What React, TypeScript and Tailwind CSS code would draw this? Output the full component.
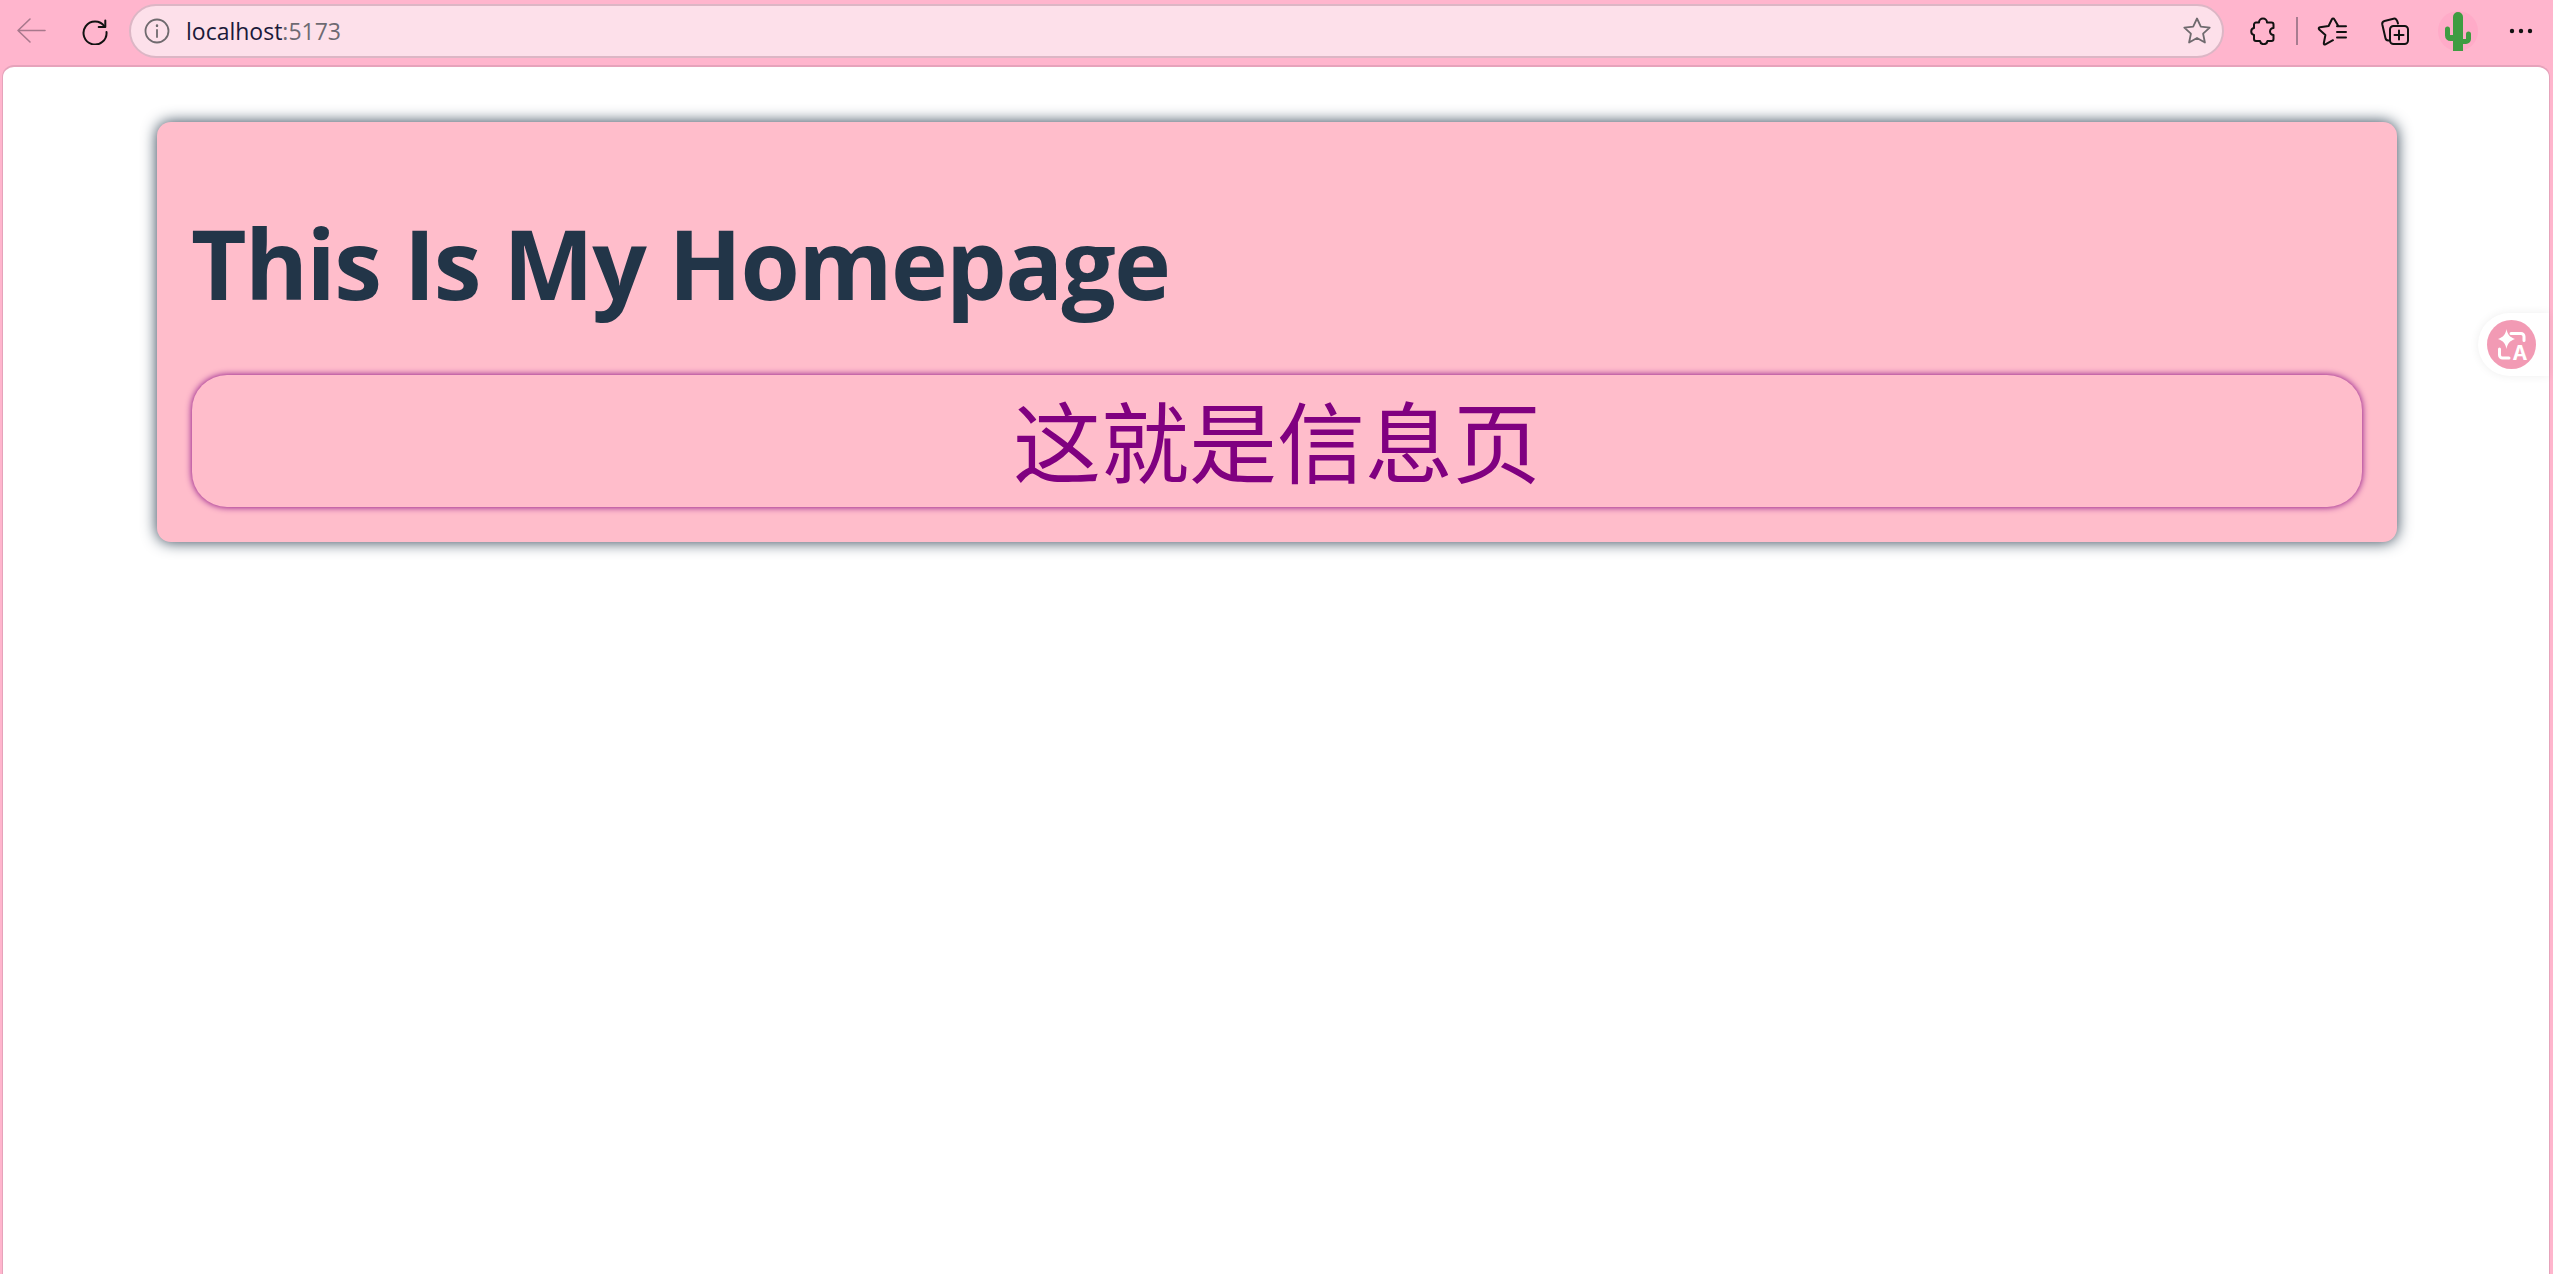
export default function App() {
  return (
    <div className="relative flex h-[1274px] w-full flex-col overflow-hidden bg-[#ffb5cd] font-['Inter','Noto_Sans',sans-serif]">
      {/* Browser toolbar */}
      <div className="flex h-[65px] shrink-0 items-center pb-[3px]">
        <div className="flex w-[129px] shrink-0 items-center">
          <svg className="ml-[16px]" width="30" height="28" viewBox="0 0 30 28" fill="none" stroke="#a8788c" strokeWidth="1.6" strokeLinecap="round" strokeLinejoin="round">
            <path d="M2 13.500h27M14 2L2 13.500 14 25" />
          </svg>
          <svg className="ml-[35px]" width="28" height="28" viewBox="0 0 28 28" fill="none" stroke="#111" strokeWidth="2" strokeLinecap="round" strokeLinejoin="round">
            <path d="M23.500 9.500A11.500 11.500 0 1 0 25.500 15" />
            <path d="M24.300 3.500v6.600h-6.600" />
          </svg>
        </div>
        <div className="flex h-[54px] w-[2095px] shrink-0 items-center rounded-[27px] border-2 border-[#dcb6c5] bg-[#fde0ea]">
          <svg className="ml-[13px]" width="26" height="26" viewBox="0 0 26 26" fill="none" stroke="#6f6a6e" strokeWidth="1.8" strokeLinecap="round">
            <circle cx="13" cy="13" r="11.500" />
            <path d="M13 12v7" />
            <path d="M13 7.500v.4" strokeWidth="2.400" />
          </svg>
          <span className="ml-[16px] text-[23px] leading-none text-[#1a1a3a] font-['Open_Sans',sans-serif]">
            localhost<span className="text-[#6e6a72]">:5173</span>
          </span>
          <svg className="ml-auto mr-[10px]" width="30" height="30" viewBox="0 0 30 30" fill="none" stroke="#6f6a6e" strokeWidth="1.8" strokeLinejoin="round">
            <path d="M15 2.500l3.800 8.200 8.900 1-6.600 6 1.800 8.800L15 22l-7.900 4.500 1.800-8.800-6.600-6 8.900-1z" />
          </svg>
        </div>
        <div className="flex flex-1 items-center">
          <svg className="ml-[26px]" width="26" height="28" viewBox="0 0 26 28" fill="none" stroke="#111" strokeWidth="2" strokeLinejoin="round">
            <path d="M9 5.500a4 4 0 0 1 8 0h4.500a2 2 0 0 1 2 2V11a3.500 3.500 0 0 0 0 7v4a2 2 0 0 1-2 2h-4a3.800 3.800 0 0 1-7.500 0H6a2 2 0 0 1-2-2v-4a3.600 3.600 0 0 1 0-7V7.500a2 2 0 0 1 2-2z" />
          </svg>
          <div className="ml-[20px] h-[28px] w-[2px] bg-[#a87c90]" />
          <svg className="ml-[18px]" width="32" height="30" viewBox="0 0 32 30" fill="none" stroke="#111" strokeWidth="2" strokeLinejoin="round" strokeLinecap="round">
            <path d="M22 9.500L18.300 3.200c-.6-1.100-1.800-1.100-2.400 0L12.600 10 4 11.300c-1.300.2-1.700 1.400-.8 2.300l6.200 5.400-1.600 8.200c-.2 1.200.6 1.700 1.600 1.200l7.600-4.200" />
            <path d="M21 10.300h9M21 16h9M21 21.500h9" />
          </svg>
          <svg className="ml-[31px]" width="32" height="30" viewBox="0 0 32 30" fill="none" stroke="#111" strokeWidth="2" strokeLinejoin="round" strokeLinecap="round">
            <rect x="11" y="10" width="18" height="18" rx="3.500" />
            <path d="M20 14.500v9M15.500 19h9" />
            <path d="M10 24.500h-.8a3 3 0 0 1-2.700-2.300L3.300 8.500A3 3 0 0 1 5.500 5l9-2.300c2-.5 3.800.8 4.500 4.800" />
          </svg>
          <div className="relative ml-[27px] flex h-[40px] w-[40px] items-center justify-center rounded-full bg-[#ffabc8]">
            <svg className="absolute left-[6px] top-[1px]" width="28" height="39" viewBox="0 0 28 39" fill="#3f9c42">
              <path d="M9 5a5 5 0 0 1 10 0v34H9z" />
              <path d="M9 29H6.500A5.500 5.500 0 0 1 1 23.500V17a2.500 2.500 0 0 1 5 0v6h3z" />
              <path d="M19 32h3a5 5 0 0 0 5-5v-5a2.500 2.500 0 0 0-5 0v5h-3z" />
            </svg>
          </div>
          <svg className="ml-[31px]" width="24" height="6" viewBox="0 0 24 6" fill="#111">
            <circle cx="3" cy="3" r="2.200" />
            <circle cx="12" cy="3" r="2.200" />
            <circle cx="21" cy="3" r="2.200" />
          </svg>
        </div>
      </div>

      {/* Page viewport */}
      <div className="ml-[2px] mr-[3px] flex-1 rounded-t-[12px] border-x border-t-2 border-[#e6a3bb] bg-white pt-[55px]">
        <div className="ml-[154px] flex w-[2240px] flex-col rounded-[14px] bg-[#ffbdcb] px-[35px] pb-[35px] shadow-[0_0_15px_#2c3e50]">
          <h1 className="-ml-[1px] mt-[91px] mb-[62px] text-[96px] leading-[100px] font-bold tracking-[-1.6px] text-[#223548] font-['Open_Sans',sans-serif]">
            This Is My Homepage
          </h1>
          <div className="flex h-[132px] items-center justify-center rounded-[35px] pb-[6px] text-[88px] leading-none text-[#800080] shadow-[0_0_7px_#800080] font-['Noto_Sans_CJK_SC',sans-serif]">
            这就是信息页
          </div>
        </div>
      </div>

      {/* Floating translate button */}
      <div className="absolute right-[4px] top-[313px] flex h-[63px] w-[71px] items-center rounded-l-[32px] bg-white pl-[9px] shadow-[0_0_10px_#00000012]">
        <svg width="49" height="49" viewBox="0 0 49 49">
          <circle cx="24.500" cy="24.500" r="24.500" fill="#f29ab4" />
          <path d="M19.500 9c1 5.500 3 8 8.500 10-5.500 2-7.500 4.500-8.500 10-1-5.500-3-8-8.500-10 5.500-2 7.500-4.500 8.500-10z" fill="#fff" />
          <path d="M24 13.500h10a3 3 0 0 1 3 3v4M12.500 29v6a3 3 0 0 0 3 3H22" fill="none" stroke="#fff" strokeWidth="3" strokeLinecap="round" />
          <text x="33" y="39.500" textAnchor="middle" fontSize="20" fontWeight="700" fill="#fff" fontFamily="Inter, sans-serif">A</text>
        </svg>
      </div>
    </div>
  );
}
